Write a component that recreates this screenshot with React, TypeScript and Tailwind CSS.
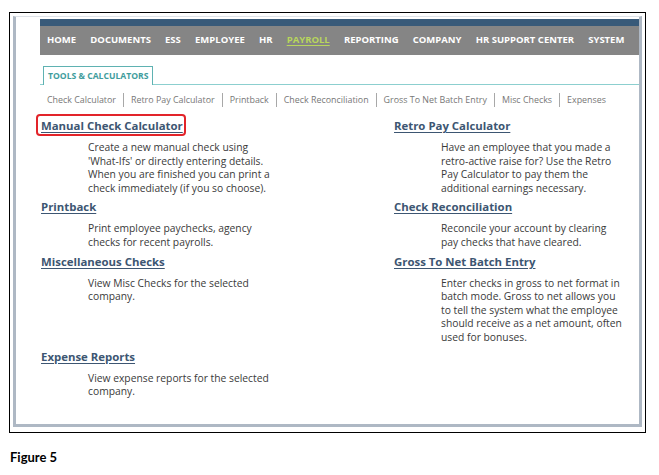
import React from 'react';

const navItems = ['HOME', 'DOCUMENTS', 'ESS', 'EMPLOYEE', 'HR', 'PAYROLL', 'REPORTING', 'COMPANY', 'HR SUPPORT CENTER', 'SYSTEM'];

const subLinks = [
  'Check Calculator',
  'Retro Pay Calculator',
  'Printback',
  'Check Reconciliation',
  'Gross To Net Batch Entry',
  'Misc Checks',
  'Expenses',
];

interface Tool {
  title: string;
  lines: string[];
  highlight?: boolean;
}

const tools: (Tool | null)[] = [
  {
    title: 'Manual Check Calculator',
    highlight: true,
    lines: [
      'Create a new manual check using',
      "'What-Ifs' or directly entering details.",
      'When you are finished you can print a',
      'check immediately (if you so choose).',
    ],
  },
  {
    title: 'Retro Pay Calculator',
    lines: [
      'Have an employee that you made a',
      'retro-active raise for? Use the Retro',
      'Pay Calculator to pay them the',
      'additional earnings necessary.',
    ],
  },
  {
    title: 'Printback',
    lines: ['Print employee paychecks, agency', 'checks for recent payrolls.'],
  },
  {
    title: 'Check Reconciliation',
    lines: ['Reconcile your account by clearing', 'pay checks that have cleared.'],
  },
  {
    title: 'Miscellaneous Checks',
    lines: ['View Misc Checks for the selected', 'company.'],
  },
  {
    title: 'Gross To Net Batch Entry',
    lines: [
      'Enter checks in gross to net format in',
      'batch mode. Gross to net allows you',
      'to tell the system what the employee',
      'should receive as a net amount, often',
      'used for bonuses.',
    ],
  },
  {
    title: 'Expense Reports',
    lines: ['View expense reports for the selected', 'company.'],
  },
  null,
];

const ToolCell = ({ tool }: { tool: Tool | null }) => {
  if (!tool) return <div />;
  return (
    <div className="flex flex-col">
      <div className="h-[16px] leading-[16px]">
        <span className="relative inline-block pl-[1px]">
          <a className="text-[11.4px] font-bold text-[#3d5672] underline underline-offset-[2px] cursor-pointer">
            {tool.title}
          </a>
          {tool.highlight && (
            <span className="absolute -left-[4px] -top-[2px] -right-[3px] -bottom-[2px] border-2 border-[#e2242a] rounded-[4px]" />
          )}
        </span>
      </div>
      <div className="mt-[9px] pl-[48px] text-[10.3px] leading-[13.6px] text-[#3a3a3a]">
        {tool.lines.map((l) => (
          <div key={l} className="whitespace-nowrap">{l}</div>
        ))}
      </div>
    </div>
  );
};

export default function App() {
  return (
    <div className="w-[659px] h-[475px] bg-white pt-[12px] font-['Open_Sans',sans-serif]">
      <div className="ml-[9px] w-[637px] h-[421px] border border-black pl-[3px] pt-[3px] pr-[3px] pb-[5px]">
        <div className="h-full bg-white border-t border-t-[#dde2e8] border-l-[3px] border-r-[3px] border-b-[3px] border-[#aeb8c4] pl-[24px]">
          {/* top menu */}
          <div className="mt-[2px]">
            <div className="h-[7px] bg-[#385a79]" />
            <div className="h-[29px] bg-[#858585] flex items-center pl-[7px] gap-[14.2px]">
              {navItems.map((item) => (
                <span
                  key={item}
                  className={`text-[9.5px] font-bold whitespace-nowrap ${
                    item === 'PAYROLL' ? 'text-[#b8d65c] underline underline-offset-[2px]' : 'text-white'
                  }`}
                >
                  {item}
                </span>
              ))}
            </div>
          </div>

          {/* tab */}
          <div className="mt-[11px] border-b border-[#8ccfcf] flex">
            <div className="ml-[3px] h-[19px] px-[4px] border border-b-0 border-[#5fb2b2] bg-white -mb-[1px] flex items-center text-[8.6px] font-bold text-[#3f9d9d]">
              TOOLS &amp; CALCULATORS
            </div>
          </div>

          {/* sub links */}
          <div className="mt-[8px] h-[14px] flex items-center pl-[7px]">
            {subLinks.map((s, i) => (
              <React.Fragment key={s}>
                {i > 0 && <span className="mx-[7px] w-px h-[14px] bg-[#a8a8a8]" />}
                <span className="text-[8.9px] text-[#777] whitespace-nowrap">{s}</span>
              </React.Fragment>
            ))}
          </div>

          {/* tools grid */}
          <div className="mt-[9px] grid grid-cols-[353px_1fr] gap-y-[2px]">
            {tools.map((t, i) => (
              <ToolCell key={i} tool={t} />
            ))}
          </div>
        </div>
      </div>
      <div className="mt-[15px] pl-[10px] text-[13px] font-bold text-black font-['Lato',sans-serif]">Figure 5</div>
    </div>
  );
}
